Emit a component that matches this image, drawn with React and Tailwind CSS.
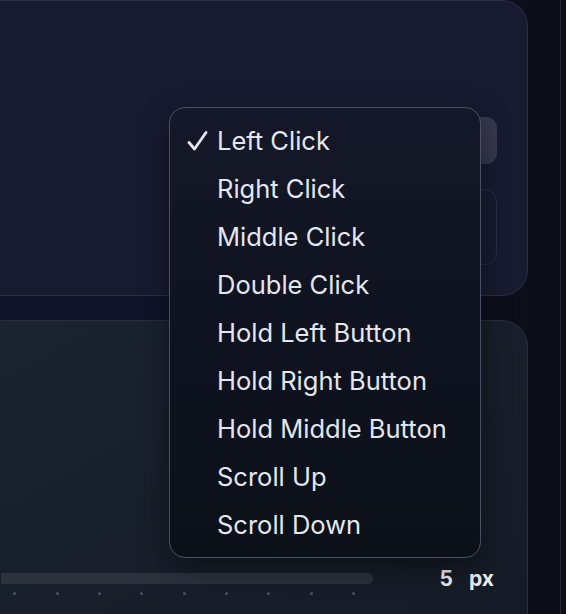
import React from "react";

const actions = [
  "Left Click",
  "Right Click",
  "Middle Click",
  "Double Click",
  "Hold Left Button",
  "Hold Right Button",
  "Hold Middle Button",
  "Scroll Up",
  "Scroll Down",
];

const ticks = [13, 56, 98, 140, 183, 225, 267, 310, 352];

const Check = () => (
  <svg width="21" height="20" viewBox="0 0 21 20" fill="none">
    <path
      d="M2 11.5 L7.5 18 L19 1.5"
      stroke="#e6e8f0"
      strokeWidth="2.8"
      strokeLinecap="round"
      strokeLinejoin="round"
    />
  </svg>
);

const ActionMenu = ({ selected }) => (
  <div className="absolute left-[169px] top-[107px] w-[312px] rounded-[16px] border-[1.5px] border-[#4a4f62] bg-gradient-to-b from-[#141828] via-[#0f1320] to-[#0c1018] pt-[9px] pb-[8px] shadow-[0_10px_30px_rgba(0,0,0,0.45)]">
    {actions.map((label) => (
      <div key={label} className="flex h-[48px] items-center pl-[17px]">
        <span className="flex w-[30px] items-center">
          {label === selected && <Check />}
        </span>
        <span className="text-[25.5px] leading-none text-[#e4e6ee]">
          {label}
        </span>
      </div>
    ))}
  </div>
);

const App = () => {
  return (
    <div
      className="relative flex h-[614px] w-[566px] overflow-hidden bg-[#0f1120]"
      style={{ fontFamily: "Inter, 'Noto Sans', sans-serif" }}
    >
      <div className="flex w-[560px] flex-col gap-[24px] bg-gradient-to-r from-[#11142a] via-[#10132a] to-[#0b0d17] pr-[32px]">
        {/* click settings card */}
        <div className="-ml-[24px] flex h-[296px] shrink-0 flex-col items-end gap-[25px] rounded-[26px] border border-[#2a2e48] bg-[#181b30] pr-[30px] pt-[116px]">
          <div className="h-[47px] w-[180px] rounded-[11px] bg-[#373a4e]" />
          <div className="h-[76px] w-[300px] rounded-[12px] border border-[#2a2e47] bg-[#181b30]" />
        </div>

        {/* offset card */}
        <div className="-ml-[24px] flex h-[320px] shrink-0 flex-col rounded-[26px] border border-[#263040] bg-gradient-to-br from-[#1b2331] to-[#151b26] pr-[33px] pt-[247px]">
          <div className="flex items-center">
            <div className="ml-[24px] h-[11px] w-[372px] rounded-r-full bg-[#2c323e]" />
            <div className="ml-auto flex gap-[16px] text-[21px] font-bold leading-none text-[#eef0f5]">
              <span>5</span>
              <span>px</span>
            </div>
          </div>
          <div className="relative ml-[24px] mt-[3px] h-[4px]">
            {ticks.map((x) => (
              <span
                key={x}
                className="absolute top-0 h-[3px] w-[3px] rounded-full bg-[#4b5462]"
                style={{ left: x - 1 }}
              />
            ))}
          </div>
        </div>
      </div>
      <div className="w-[6px] border-l border-[#262a38] bg-[#0e1018]" />

      <ActionMenu selected="Left Click" />
    </div>
  );
};

export default App;
